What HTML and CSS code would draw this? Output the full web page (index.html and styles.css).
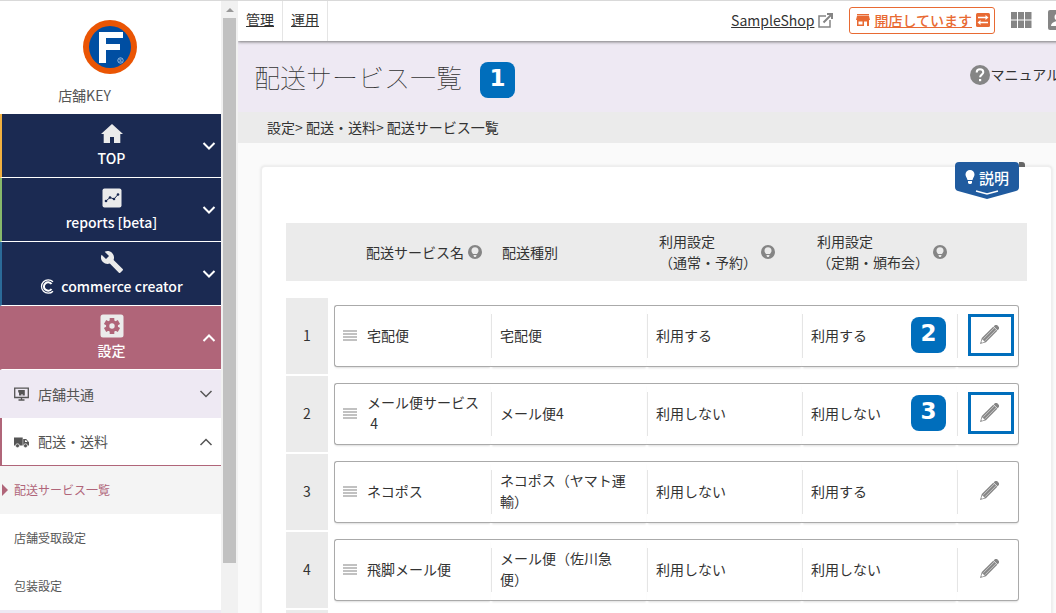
FILE: index.html
```html
<!DOCTYPE html>
<html lang="ja">
<head>
<meta charset="utf-8">
<title>配送サービス一覧</title>
<link rel="stylesheet" href="styles.css">
</head>
<body>
<svg class="defs" aria-hidden="true">
  <symbol id="bulb" viewBox="0 0 14 14">
    <circle cx="7" cy="7" r="7" fill="#858585"/>
    <path d="M7 2.200a3.500 3.500 0 0 0-3.500 3.500c0 1.400.9 2 1.500 3.300h4c.6-1.300 1.500-1.900 1.500-3.300A3.500 3.500 0 0 0 7 2.200zM5.600 9.900h2.800v1.200l-.7 1H6.300l-.7-1z" fill="#ebebeb"/>
  </symbol>
  <symbol id="pencil" viewBox="0 0 22 22">
    <g transform="rotate(45 11 11)" fill="#858585">
      <path d="M8 .7V-1a2 2 0 0 1 2-2h2a2 2 0 0 1 2 2V.7z"/>
      <path d="M7.800 1.300h6.400V19L11 25l-3.200-6z"/>
      <path d="M9.600 1.500v17M12.400 1.500v17" stroke="#fff" stroke-width=".6"/>
      <path d="M9 19.500h4l-1.500 3h-1z" fill="#fff"/>
    </g>
  </symbol>
  <symbol id="drag" viewBox="0 0 14 12">
    <path d="M0 1h14M0 4h14M0 7h14M0 10h14" stroke="#adadad" stroke-width="1.500"/>
  </symbol>
  <symbol id="down" viewBox="0 0 14 10"><path d="M1.500 2l5.500 5.500L12.500 2" fill="none" stroke="currentColor"/></symbol>
  <symbol id="up" viewBox="0 0 14 10"><path d="M1.500 8L7 2.500 12.500 8" fill="none" stroke="currentColor"/></symbol>
</svg>
<div class="app">
  <aside class="sidebar">
    <div class="shop">
      <svg class="logo" viewBox="0 0 54 54" role="img" aria-label="F">
        <circle cx="27" cy="27" r="27" fill="#ea5504"/>
        <circle cx="27" cy="27" r="21" fill="#004ea2"/>
        <path d="M16 12h24v6H23v6h14v6H23v13h-7z" fill="#fff"/>
        <circle cx="37.500" cy="40.500" r="2.700" fill="none" stroke="#b9d0e8" stroke-width=".8"/>
        <path d="M38.500 39.600c-2-1-2.500.6-1 .9s1 1.800-1 1" fill="none" stroke="#b9d0e8" stroke-width=".7"/>
      </svg>
      <p class="shop-key">店舗KEY</p>
    </div>
    <nav>
      <button class="nav nav-top">
        <svg class="nav-icon" viewBox="0 0 24 22"><path d="M12 1L1 11h2.700v9H10v-6h4v6h6.300v-9H23z" fill="#ebebeb"/></svg>
        <span>TOP</span><svg class="caret"><use href="#down"/></svg>
      </button>
      <button class="nav nav-reports">
        <svg class="nav-icon" viewBox="0 0 24 22"><rect x="2.500" y="1.500" width="19" height="19" rx="2" fill="#ebebeb"/><path d="M6 14l4-3.500 4 1.500 4-4.500" fill="none" stroke="#1b2a52"/><g fill="#1b2a52"><circle cx="6" cy="14" r="1.300"/><circle cx="10" cy="10.500" r="1.300"/><circle cx="14" cy="12" r="1.300"/><circle cx="18" cy="7.500" r="1.300"/></g></svg>
        <span>reports [beta]</span><svg class="caret"><use href="#down"/></svg>
      </button>
      <button class="nav nav-creator">
        <svg class="nav-icon" viewBox="0 0 24 24"><path d="M22.700 19l-9.100-9.100c.9-2.300.4-5-1.500-6.900-2-2-5-2.400-7.400-1.300L9 6 6 9 1.600 4.700C.4 7.100.9 10.100 2.900 12.100c1.900 1.900 4.600 2.400 6.900 1.500l9.100 9.100c.4.4 1 .4 1.400 0l2.300-2.300c.5-.4.5-1.100.1-1.400z" fill="#ebebeb"/></svg>
        <span class="creator"><svg class="mark" viewBox="0 0 15 15"><path d="M13 2.800A6.700 6.700 0 1 0 13 12.200" fill="none" stroke="#fff" stroke-width="1.300"/><path d="M11.500 5A4.200 4.200 0 1 0 11.500 10" fill="none" stroke="#fff" stroke-width="2"/></svg>commerce creator</span><svg class="caret"><use href="#down"/></svg>
      </button>
      <button class="nav nav-settings" aria-expanded="true">
        <svg class="nav-icon" viewBox="0 0 24 24"><rect x=".5" y=".5" width="23" height="23" rx="2.500" fill="#ebebeb"/><g stroke="#b06579" stroke-width="4.600"><path d="M12 4v16M5.070 8l13.860 8M5.070 16l13.860-8"/></g><circle cx="12" cy="12" r="6" fill="#b06579"/><circle cx="12" cy="12" r="2.700" fill="#ebebeb"/></svg>
        <span>設定</span><svg class="caret"><use href="#up"/></svg>
      </button>
      <button class="group">
        <svg class="group-icon" viewBox="0 0 15 14"><path d="M.7 1.200h13.600v9.300H.7zM7.500 10.500V13M4.500 13h6" fill="none" stroke="#555" stroke-width="1.300"/><path d="M4.200 3h6.600v5.500H8.500v-1.500h-1v1.500H5V5.500h-.8z" fill="#555"/></svg>
        <span>店舗共通</span><svg class="caret thin"><use href="#down"/></svg>
      </button>
      <button class="group open" aria-expanded="true">
        <svg class="group-icon" viewBox="0 0 15 14"><path d="M0 2.500h8.700v8H0zM9.200 4h3L15 7.300v3.200H9.200z" fill="#555"/><path d="M11 5.200h1.200l1.400 1.900H11z" fill="#fff"/><g fill="#555" stroke="#fff" stroke-width=".7"><circle cx="3.500" cy="10.800" r="2"/><circle cx="11.500" cy="10.800" r="2"/></g></svg>
        <span>配送・送料</span><svg class="caret thin"><use href="#up"/></svg>
      </button>
      <a class="item current" href="#">配送サービス一覧</a>
      <a class="item" href="#">店舗受取設定</a>
      <a class="item" href="#">包装設定</a>
    </nav>
  </aside>
  <div class="scrollbar" aria-hidden="true"><i class="arrow"></i><i class="thumb"></i></div>
  <main>
    <header class="topbar">
      <a class="tab" href="#">管理</a>
      <a class="tab" href="#">運用</a>
      <div class="tools">
        <a class="shop-link" href="#"><span>SampleShop</span><svg viewBox="0 0 15 15"><path d="M8 3H1v11h11V7" fill="none" stroke="#858585" stroke-width="1.500"/><path d="M9 1h5v5M14 1L5.500 9.500" fill="none" stroke="#858585" stroke-width="2"/></svg></a>
        <a class="status" href="#">
          <svg viewBox="0 0 14 14"><path d="M1 1h12v1.500H1zM1 3h12l1 4H0zM1 7h12v6h-2V8.500H8V13H1z" fill="#e86a33"/><path d="M2.500 8.500h4v3h-4z" fill="#fff"/></svg>
          <span>開店しています</span>
          <svg viewBox="0 0 14 14"><rect width="14" height="14" rx="1.500" fill="#e86a33"/><path d="M2 4.500h8M4 9.500h8" stroke="#fff" stroke-width="1.500"/><path d="M9.500 2l3 2.500-3 2.500zM4.500 7l-3 2.500 3 2.500z" fill="#fff"/></svg>
        </a>
        <svg class="apps" viewBox="0 0 21 16" fill="#858585"><path d="M0 0h6v7.500H0zM7 0h6v7.500H7zM14 0h6.500v7.500H14zM0 8.500h6V16H0zM7 8.500h6V16H7zM14 8.500h6.500V16H14z"/></svg>
        <svg class="account" viewBox="0 0 20 20"><rect width="20" height="20" rx="2" fill="#858585"/><circle cx="10" cy="7" r="3.500" fill="#fff"/><path d="M3 16c0-3 3-5 7-5s7 2 7 5z" fill="#fff"/></svg>
      </div>
    </header>
    <section class="heading">
      <h1>配送サービス一覧</h1>
      <span class="badge">1</span>
      <a class="manual" href="#"><svg viewBox="0 0 20 20"><circle cx="10" cy="10" r="10" fill="#858585"/><path d="M6.700 7.500C6.700 5.500 8 4.300 10 4.300s3.300 1.200 3.300 2.900c0 2.300-3.200 2.600-3.200 5" fill="none" stroke="#fff" stroke-width="2"/><path d="M9 14h2.200v2.200H9z" fill="#fff"/></svg>マニュアル</a>
    </section>
    <nav class="crumbs">設定&gt; 配送・送料&gt; 配送サービス一覧</nav>
    <section class="content">
      <div class="panel">
        <button class="tip">
          <svg class="tip-shape" viewBox="0 0 70 38"><path d="M64 0h3a3 3 0 0 1 3 3v2h-6z" fill="#666"/><path d="M4 0h56a4 4 0 0 1 4 4v21q0 3-3 4L32 37 3 29q-3-1-3-4V4a4 4 0 0 1 4-4z" fill="#205b9f"/><path d="M21 29l11 3 11-3" fill="none" stroke="#fff" stroke-width="1.300"/><path d="M15 8a4.500 4.500 0 0 0-4.500 4.500c0 2 1.300 2.500 2 5.500h5c.7-3 2-3.500 2-5.500A4.500 4.500 0 0 0 15 8zM13 19h4v2l-1 1h-2l-1-1z" fill="#fff"/></svg>
          <span>説明</span>
        </button>
        <table>
          <thead>
            <tr>
              <th></th>
              <th>配送サービス名<svg class="help"><use href="#bulb"/></svg></th>
              <th>配送種別</th>
              <th><span>利用設定<br>（通常・予約）</span><svg class="help"><use href="#bulb"/></svg></th>
              <th><span>利用設定<br>（定期・頒布会）</span><svg class="help"><use href="#bulb"/></svg></th>
              <th></th>
            </tr>
          </thead>
          <tbody>
            <tr>
              <td>1</td>
              <td><svg class="drag"><use href="#drag"/></svg><span>宅配便</span></td>
              <td><span>宅配便</span></td>
              <td><span>利用する</span></td>
              <td><span>利用する</span><b class="badge">2</b></td>
              <td><button class="edit marked" aria-label="編集"><svg><use href="#pencil"/></svg></button></td>
            </tr>
            <tr>
              <td>2</td>
              <td><svg class="drag"><use href="#drag"/></svg><span>メール便サービス<br>&nbsp;4</span></td>
              <td><span>メール便4</span></td>
              <td><span>利用しない</span></td>
              <td><span>利用しない</span><b class="badge">3</b></td>
              <td><button class="edit marked" aria-label="編集"><svg><use href="#pencil"/></svg></button></td>
            </tr>
            <tr>
              <td>3</td>
              <td><svg class="drag"><use href="#drag"/></svg><span>ネコポス</span></td>
              <td><span>ネコポス（ヤマト運輸）</span></td>
              <td><span>利用しない</span></td>
              <td><span>利用する</span></td>
              <td><button class="edit" aria-label="編集"><svg><use href="#pencil"/></svg></button></td>
            </tr>
            <tr>
              <td>4</td>
              <td><svg class="drag"><use href="#drag"/></svg><span>飛脚メール便</span></td>
              <td><span>メール便（佐川急便）</span></td>
              <td><span>利用しない</span></td>
              <td><span>利用しない</span></td>
              <td><button class="edit" aria-label="編集"><svg><use href="#pencil"/></svg></button></td>
            </tr>
            <tr class="next"><td></td></tr>
          </tbody>
        </table>
      </div>
    </section>
  </main>
</div>
</body>
</html>
```

FILE: styles.css
```css
* { box-sizing: border-box; }
body {
  margin: 0;
  height: 100vh;
  overflow: hidden;
  font: 14px/21px "Noto Sans CJK JP", sans-serif;
  color: #333;
}
button { font: inherit; border: 0; padding: 0; background: none; cursor: pointer; }
a { color: inherit; }
svg { flex: none; overflow: visible; }
.defs { position: absolute; width: 0; height: 0; }
.app { display: flex; height: 100vh; border-top: 1px solid #d9d9d9; overflow: hidden; }

/* sidebar */
.sidebar { width: 221px; flex: none; background: #eee9f3; overflow: hidden; color: #555; }
.shop { background: #fff; height: 113px; padding: 19px 2px 0 0; text-align: center; }
.logo { width: 54px; height: 54px; display: block; margin: 0 auto; }
.shop-key { margin: 11px 0 0; padding-right: 50px; }
.nav {
  position: relative;
  display: flex; flex-direction: column; align-items: center;
  width: 100%; height: 64px; padding-top: 8px;
  border-left: 2px solid; border-bottom: 1px solid #fff;
  background: #1b2a52; font-weight: 500; line-height: 24px;
}
.nav span { color: #fff; }
.nav-top { border-left-color: #f0b040; }
.nav-reports { border-left-color: #86b86b; }
.nav-creator { border-left-color: #2b6b99; }
.nav-settings { background: #b06579; border-left-color: #b06579; }
.nav-icon { width: 24px; height: 24px; }
.creator { display: flex; align-items: center; gap: 6px; }
.mark { width: 15px; height: 15px; }
.caret { width: 14px; height: 10px; color: #fff; stroke-width: 2; }
.nav .caret { position: absolute; right: 5px; top: 27px; }
.caret.thin { color: #555; stroke-width: 1.5; margin-left: auto; }
.group {
  display: flex; align-items: center; gap: 9px;
  width: 100%; height: 48px; padding: 0 8px 0 14px; color: #555;
}
.group.open { background: #fff; border-left: 2px solid #b06579; border-bottom: 1px solid #b06579; padding-left: 12px; }
.group-icon { width: 15px; height: 14px; }
.item {
  display: block; height: 48px; padding-left: 14px;
  background: #fff; font-size: 12px; line-height: 48px; text-decoration: none;
}
.item.current { position: relative; background: #f4f4f4; color: #b06579; }
.item.current::before {
  content: ""; position: absolute; left: 2px; top: 18px;
  border: 6px solid transparent; border-left-color: #b06579; border-right: 0;
}
.scrollbar { width: 17px; flex: none; padding: 7px 2px 0; background: #f1f1f1; }
.arrow { display: block; width: 0; margin: 0 auto 6px; border: 4px solid transparent; border-top: 0; border-bottom-color: #999; }
.thumb { display: block; height: 90%; background: #c1c1c1; }

/* header */
main { flex: 1; min-width: 0; background: #fafafa; overflow: hidden; }
.topbar {
  position: relative; display: flex; height: 40px; margin-right: -12px;
  background: #fff; box-shadow: 0 1px 3px #777;
}
.tab { padding: 8px; border-right: 1px solid #e5e5e5; }
.tools { margin-left: auto; padding-bottom: 2px; display: flex; align-items: center; gap: 16px; }
.shop-link { display: flex; align-items: center; gap: 4px; text-decoration: none; }
.shop-link span, .status span { text-decoration: underline; }
.shop-link svg { width: 15px; height: 15px; }
.status {
  display: flex; align-items: center; gap: 4px; height: 27px; padding: 0 4px 0 6px;
  border: 1px solid #e86a33; border-radius: 3px; color: #e86a33; font-weight: 500; text-decoration: none;
}
.status svg { width: 14px; height: 14px; }
.apps { width: 21px; height: 16px; }
.account { width: 20px; height: 20px; }
.heading { display: flex; align-items: center; gap: 18px; height: 71px; padding-left: 16px; margin-right: -4px; background: #eee9f3; }
h1 { margin: 0; font-size: 26px; line-height: 36px; font-weight: 100; }
.badge {
  flex: none; width: 35px; height: 36px; padding-bottom: 4px; border-radius: 8px;
  background: #006ebc; color: #fff; text-align: center;
  font: bold 23px/32px "DejaVu Sans", sans-serif;
}
.heading .badge { margin-top: 6px; }
.manual { display: flex; align-items: center; margin-left: auto; padding-bottom: 4px; text-decoration: none; }
.manual svg { width: 20px; height: 20px; }
.crumbs { height: 31px; padding-left: 29px; background: #ebebeb; line-height: 31px; }

/* list */
.content { padding: 23px 4px 0 23px; }
.panel {
  position: relative; padding: 56px 24px 0; min-height: 500px;
  background: #fff; border: 1px solid #eee; border-radius: 4px; box-shadow: 0 0 3px #ddd;
}
.tip { position: absolute; right: 26px; top: -5px; width: 70px; height: 38px; color: #fff; font-size: 15px; font-weight: 500; }
.tip-shape { position: absolute; left: 0; top: 0; width: 70px; height: 38px; }
.tip span { position: absolute; left: 24px; top: 5px; white-space: nowrap; }
table, thead, tbody { display: block; }
tr { display: grid; grid-template-columns: 48px 157px 156fr 155fr 155fr 62px; padding-right: 8px; }
thead tr { height: 58px; margin-bottom: 17px; background: #ebebeb; grid-template-columns: 80px 136px 157fr 158fr 153fr 49px; }
th { display: flex; align-items: center; gap: 4px; padding: 0; font-weight: 400; text-align: left; white-space: nowrap; }
.help { width: 14px; height: 14px; }
td { padding: 0; }
tbody tr { height: 76px; margin-bottom: 2px; }
td:first-child { display: grid; place-items: center; width: 42px; padding-bottom: 2px; background: #ebebeb; }
td:not(:first-child) {
  display: flex; align-items: center; position: relative;
  height: 62px; margin-top: 7px; padding: 0 16px 0 9px;
  border: solid #aaa; border-width: 1px 0; background: #fff;
  box-shadow: 0 2px 2px -1px #ddd;
}
td span { padding-bottom: 2px; }
td:nth-child(n+3)::before { content: ""; position: absolute; left: 0; top: 8px; bottom: 8px; border-left: 1px solid #e5e5e5; }
td:nth-child(2):not(:first-child) { gap: 10px; padding: 0 0 0 8px; border-left-width: 1px; border-radius: 3px 0 0 3px; }
td:last-child:not(:first-child) { justify-content: flex-end; padding: 0 4px 2px 0; border-right-width: 1px; border-radius: 0 3px 3px 0; }
.drag { width: 14px; height: 12px; }
td .badge { position: absolute; right: 11px; top: 11px; }
.edit { display: grid; place-items: center; width: 46px; height: 42px; padding-right: 5px; color: #858585; }
.edit.marked { border: 3px solid #006ebc; }
.edit svg { width: 20px; height: 20px; }
```
